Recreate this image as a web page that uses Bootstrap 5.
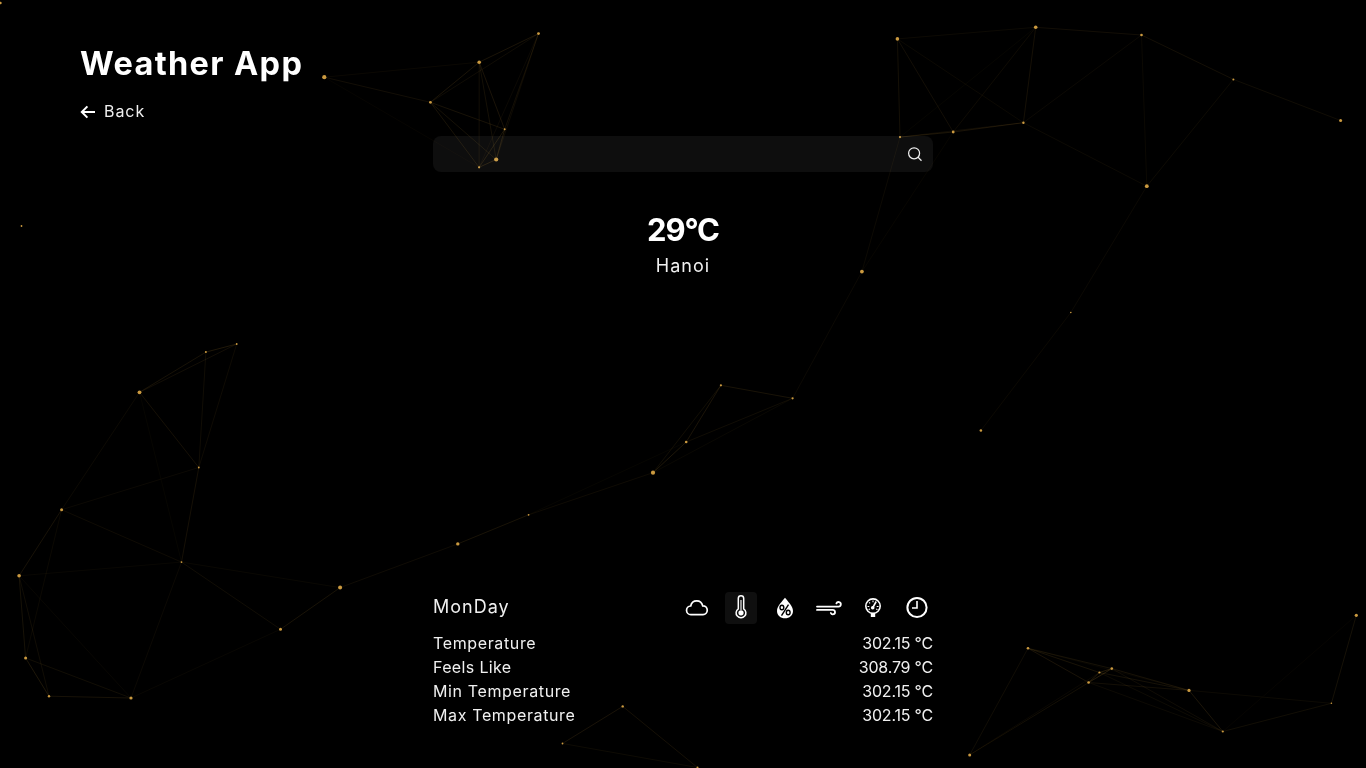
<!DOCTYPE html>
<html lang="en">
<head>
<meta charset="utf-8">
<title>Weather App</title>
<link href="https://cdn.jsdelivr.net/npm/bootstrap@5.3.0/dist/css/bootstrap.min.css" rel="stylesheet">
<style>
body{background:#000;color:#f0f0f0;font-family:Inter,sans-serif;overflow:hidden}
.page{height:100vh;padding:40px 80px 41px}
.sky{z-index:-1}
.title{font-size:32.5px;font-weight:700;line-height:48px;letter-spacing:1.35px;color:#fff}
.back{font-size:16px;line-height:24px;height:24px;letter-spacing:.95px;gap:9px;margin-top:12px;color:#f0f0f0}
.back span{margin-bottom:2px}
.panel{width:500px}
.search{height:36px;margin-top:12px;border-radius:8px;background:rgba(255,255,255,.055);padding-right:10px}
.degrees{font-size:31px;font-weight:700;line-height:48px;letter-spacing:-1.1px;margin-top:34px;color:#fff}
.city,.day{font-size:18px;line-height:24px;letter-spacing:1px}
.day{line-height:29px}
.tabs{gap:12px}
.tab{width:32px;height:32px;border-radius:4px}
.tab.active{background:#0f0f0f}
.readings{font-size:16px;line-height:24px;margin-top:7px}
.label{letter-spacing:.63px}
.label-tight{letter-spacing:.35px}
.value{letter-spacing:-.2px}
</style>
</head>
<body>
<svg class="sky position-fixed top-0 start-0 w-100 h-100" id="sky"></svg>
<div class="page d-flex flex-column">
  <header class="d-flex flex-column align-items-start">
    <h1 class="title mb-0">Weather App</h1>
    <a href="#" class="back d-flex align-items-center text-decoration-none">
      <svg width="15" height="14" viewBox="0 0 15 14" fill="none" stroke="#fff" stroke-width="2"><path d="M7.400 1.400 1.800 7l5.600 5.600M1.800 7H15"/></svg>
      <span>Back</span>
    </a>
  </header>
  <main class="panel d-flex flex-column flex-grow-1 mx-auto">
    <div class="search d-flex align-items-center justify-content-end">
      <svg width="16" height="16" viewBox="0 0 16 16" fill="none" stroke="#eee" stroke-width="1.25"><circle cx="7.1" cy="7.3" r="5.5"/><path d="m11.1 11.3 3.4 3.4"/></svg>
    </div>
    <section class="text-center">
      <div class="degrees">29°C</div>
      <div class="city">Hanoi</div>
    </section>
    <section class="mt-auto">
      <div class="d-flex justify-content-between">
        <div class="day">MonDay</div>
        <div class="tabs d-flex">
          <div class="tab"><svg width="32" height="32" viewBox="0 0 32 32" fill="none" stroke="#fff" stroke-width="1.7"><path d="M10 22.6a4.3 4.3 0 0 1-.3-8.6C10.400 10.700 12.800 8.900 15.700 8.900c3 0 5.300 1.900 6 4.900a4.400 4.400 0 0 1 .3 8.800z"/></svg></div>
          <div class="tab active"><svg width="32" height="32" viewBox="0 0 32 32" fill="none" stroke="#fff"><path stroke-width="1.5" d="M13.300 16.800V6.400a2.700 2.700 0 0 1 5.400 0v10.400a4.900 4.900 0 1 1-5.400 0z"/><circle cx="16" cy="20.800" r="2.600" fill="#fff" stroke="none"/><path stroke="#aaa" stroke-width="1.700" d="M16 8v11"/></svg></div>
          <div class="tab"><svg width="32" height="32" viewBox="0 0 32 32"><path fill="#fff" d="M16 5.800c2.600 3.500 8 8.200 8 13.200 0 4.500-3.600 7.300-8 7.300s-8-2.800-8-7.300c0-5 5.400-9.700 8-13.200z"/><g fill="none" stroke="#000" stroke-width="1.400"><ellipse cx="12.900" cy="15.500" rx="1.900" ry="2.200"/><ellipse cx="19.200" cy="20.500" rx="1.900" ry="2.200"/><path d="m19.500 12.700-7 11"/></g></svg></div>
          <div class="tab"><svg width="32" height="32" viewBox="0 0 32 32" fill="none" stroke="#fff" stroke-width="1.800" stroke-linecap="round"><path d="M4 14.600h21.500a2.300 2.300 0 1 0-2.100-3.200M4 17.900h15.800a2.200 2.200 0 1 1-2 3.100"/></svg></div>
          <div class="tab"><svg width="32" height="32" viewBox="0 0 32 32" fill="none" stroke="#fff"><circle cx="16" cy="14.100" r="7.200" stroke-width="1.600"/><path stroke-width="1.100" d="M10.500 14.500h1.800m7.400 0h1.800M12.100 10.400l1 1M16 8.500v1.700M11.700 17.800l1.200-.9m6.400 0 1.100.9"/><path stroke-width="1.600" d="m15.800 15.500 3.400-6"/><circle cx="15.700" cy="15.700" r="1.800" fill="#fff" stroke="none"/><path stroke-width="4.400" d="M16 21v4"/></svg></div>
          <div class="tab"><svg width="32" height="32" viewBox="0 0 32 32" fill="none" stroke="#fff"><circle cx="16" cy="15.500" r="9.600" stroke-width="2"/><path stroke-width="1.600" d="M16 9v7h-5"/></svg></div>
        </div>
      </div>
      <div class="readings">
        <div class="d-flex justify-content-between"><span class="label">Temperature</span><span class="value">302.15 °C</span></div>
        <div class="d-flex justify-content-between"><span class="label-tight">Feels Like</span><span class="value">308.79 °C</span></div>
        <div class="d-flex justify-content-between"><span class="label">Min Temperature</span><span class="value">302.15 °C</span></div>
        <div class="d-flex justify-content-between"><span class="label">Max Temperature</span><span class="value">302.15 °C</span></div>
      </div>
    </section>
  </main>
</div>
<script src="https://cdn.jsdelivr.net/npm/bootstrap@5.3.0/dist/js/bootstrap.bundle.min.js"></script>
<script>
// Particles: x, y, radius. Pairs closer than LINK are joined, fading with distance.
const LINK = 180;
const dots = [[.5,3,1.2],[324.3,77.2,2.1],[479.2,62.2,1.8],[538.500,33.600,1.400],[430.400,102.300,1.400],[504.700,129.300,1],[496.200,159.500,2.100],[479.100,167.300,1.100],
[897.400,38.900,1.800],[1035.700,27.300,1.800],[1141.500,35,1.300],[1233.400,79.400,1],[1340.600,120.500,1.500],[900,137.100,1.100],[953.200,132,1.400],[1023.400,122.700,1.200],[1146.800,186.200,1.900],
[861.900,271.600,1.900],[1070.800,312.500,.8],[980.900,430.500,1.300],[21.500,226,.9],
[205.900,352.100,1],[236.700,344,.9],[139.500,392.300,1.900],[198.800,467.500,.9],[61.600,509.700,1.500],[19.100,575.800,1.800],[181.500,562.100,.9],[340.100,587.600,2],[280.500,629.300,1.500],[25.600,658,1.500],[49,696.200,1.200],[131,698,1.600],
[457.800,543.900,1.700],[528.600,514.800,.9],[653,472.700,2.100],[686.200,442,1.300],[720.900,385.300,1.100],[792.600,398.300,1.100],
[622.700,706.400,1.200],[562.500,743.500,.9],[697.500,767.500,1],
[1028,648.300,1.300],[969.700,754.900,1.500],[1088.600,682.500,1.300],[1099.400,672.500,1.100],[1111.800,668.600,1.300],[1189,690.400,1.600],[1222.800,731.500,1.100],[1331.400,703.300,.8],[1356.300,615.300,1.600]];
let art = '';
dots.forEach((a, i) => dots.slice(i + 1).forEach(b => {
  const d = Math.hypot(a[0] - b[0], a[1] - b[1]);
  if (d < LINK) art += `<line x1="${a[0]}" y1="${a[1]}" x2="${b[0]}" y2="${b[1]}" stroke="#d4a03e" stroke-opacity="${(.03 + .15 * (1 - d / LINK)).toFixed(3)}"/>`;
}));
dots.forEach(([x, y, r]) => art += `<circle cx="${x}" cy="${y}" r="${r}" fill="#cb9a40"/>`);
document.getElementById('sky').innerHTML = art;
</script>
</body>
</html>
